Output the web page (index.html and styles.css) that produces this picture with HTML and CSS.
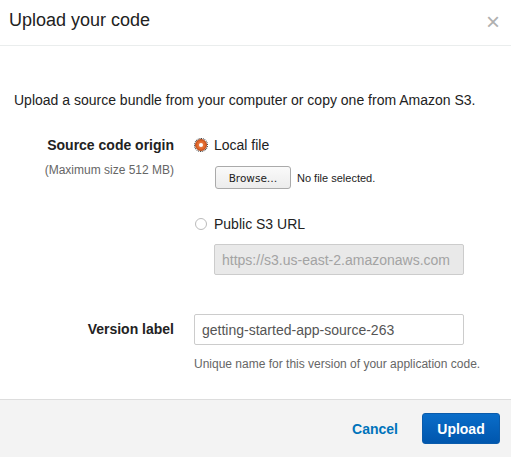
FILE: index.html
```html
<!DOCTYPE html>
<html>
<head>
<meta charset="utf-8">
<link rel="stylesheet" href="styles.css">
</head>
<body>
<div class="modal">
  <div class="header">
    <h1 class="title">Upload your code</h1>
    <span class="close">&#215;</span>
  </div>
  <div class="body">
    <p class="intro">Upload a source bundle from your computer or copy one from Amazon S3.</p>
    <div class="row origin">
      <div class="label">
        <div class="label-main">Source code origin</div>
        <div class="label-sub">(Maximum size 512 MB)</div>
      </div>
      <div class="control">
        <div class="radio-line">
          <span class="radio checked"></span>
          <span class="radio-text">Local file</span>
        </div>
        <div class="file-line">
          <span class="browse">Browse…</span>
          <span class="nofile">No file selected.</span>
        </div>
        <div class="radio-line second">
          <span class="radio"></span>
          <span class="radio-text">Public S3 URL</span>
        </div>
        <div class="url-input">https://s3.us-east-2.amazonaws.com</div>
      </div>
    </div>
    <div class="row version">
      <div class="label">
        <div class="label-main">Version label</div>
      </div>
      <div class="control">
        <div class="text-input">getting-started-app-source-263</div>
        <div class="help">Unique name for this version of your application code.</div>
      </div>
    </div>
  </div>
  <div class="footer">
    <span class="cancel">Cancel</span>
    <span class="upload">Upload</span>
  </div>
</div>
</body>
</html>
```
FILE: styles.css
```css
* { box-sizing: border-box; }
html, body { margin: 0; padding: 0; background: #fff; }
body {
  font-family: "Liberation Sans", Arial, sans-serif;
  color: #222;
  width: 511px;
  height: 457px;
  overflow: hidden;
}
.modal { display: flex; flex-direction: column; height: 457px; }
.header {
  height: 46px;
  border-bottom: 1px solid #eaeded;
  display: flex;
  align-items: center;
  justify-content: space-between;
  padding: 0 11px 0 9px;
}
.title {
  margin: 0;
  font-size: 18px;
  font-weight: normal;
  color: #222;
  position: relative;
  top: -2px;
}
.close {
  font-size: 24px;
  color: #b0b0b0;
  line-height: 1;
  position: relative;
  top: -1px;
}
.body {
  flex: 1;
  padding: 0 14px;
}
.intro {
  margin: 45px 0 0;
  font-size: 14px;
  line-height: 18px;
  color: #222;
}
.row {
  display: grid;
  grid-template-columns: 160px 1fr;
  column-gap: 20px;
}
.origin { margin-top: 27px; }
.version { margin-top: 39px; }
.label { text-align: right; }
.label-main {
  font-size: 14px;
  font-weight: bold;
  line-height: 18px;
  color: #222;
}
.label-sub {
  font-size: 12px;
  color: #666;
  margin-top: 9px;
  line-height: 14px;
}
.version .label { padding-top: 6px; }
.radio-line {
  display: flex;
  align-items: center;
  height: 18px;
}
.radio {
  width: 12px;
  height: 12px;
  border-radius: 50%;
  border: 1px solid #bbb;
  background: #fff;
  margin-left: 1px;
  margin-right: 7px;
  position: relative;
}
.radio.checked {
  background: radial-gradient(circle, #f08a50 0%, #dc5e22 70%);
  border-color: #b94a17;
  outline: 1px dotted #222;
  outline-offset: 0px;
}
.radio.checked::after {
  content: "";
  position: absolute;
  width: 4px;
  height: 4px;
  border-radius: 50%;
  background: #fff;
  left: 3px;
  top: 3px;
}
.radio-text { font-size: 14px; color: #222; }
.file-line {
  display: flex;
  align-items: center;
  margin-top: 12px;
  padding-left: 21px;
}
.browse {
  width: 76px;
  height: 23px;
  border: 1px solid #aaa;
  border-radius: 3px;
  background: linear-gradient(#fafafa, #ececec);
  font-family: "DejaVu Sans", sans-serif;
  font-size: 10.5px;
  color: #222;
  display: flex;
  align-items: center;
  justify-content: center;
}
.nofile { font-size: 11px; margin-left: 6px; color: #222; }
.second { margin-top: 26px; }
.url-input {
  margin-top: 11px;
  margin-left: 20px;
  width: 250px;
  height: 31px;
  border: 1px solid #ccc;
  border-radius: 2px;
  background: #e9e9e9;
  color: #a3a3a3;
  font-size: 14px;
  padding-left: 7px;
  display: flex;
  align-items: center;
}
.text-input {
  width: 270px;
  height: 31px;
  border: 1px solid #ccc;
  border-radius: 2px;
  background: #fff;
  color: #555;
  font-size: 14px;
  padding-left: 7px;
  display: flex;
  align-items: center;
}
.help {
  font-size: 12px;
  color: #666;
  margin-top: 12px;
  line-height: 14px;
}
.footer {
  height: 58px;
  border-top: 1px solid #ddd;
  background: #f3f3f3;
  display: flex;
  align-items: center;
  justify-content: flex-end;
  padding-right: 11px;
}
.cancel {
  font-size: 14px;
  font-weight: bold;
  color: #0073bb;
  margin-right: 24px;
}
.upload {
  width: 78px;
  height: 31px;
  border-radius: 3px;
  background: linear-gradient(#0a6dc9, #0056ad);
  border: 1px solid #0a5bab;
  color: #fff;
  font-size: 14px;
  font-weight: bold;
  display: flex;
  align-items: center;
  justify-content: center;
}
```
